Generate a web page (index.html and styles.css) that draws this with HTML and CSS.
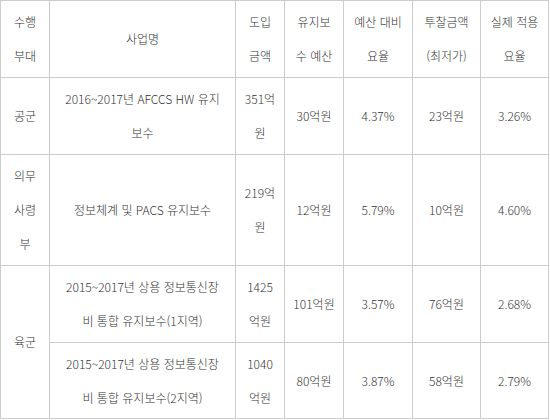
FILE: index.html
```html
<!DOCTYPE html>
<html lang="ko">
<head>
<meta charset="utf-8">
<link rel="stylesheet" href="styles.css">
</head>
<body>
<table class="grid">
  <colgroup>
    <col class="c-unit">
    <col class="c-name">
    <col class="c-cost">
    <col class="c-budget">
    <col class="c-rate">
    <col class="c-bid">
    <col class="c-real">
  </colgroup>
  <tr class="r2">
    <td>수행<br>부대</td>
    <td>사업명</td>
    <td>도입<br>금액</td>
    <td>유지보<br>수 예산</td>
    <td>예산 대비<br>요율</td>
    <td>투찰금액<br>(최저가)</td>
    <td>실제 적용<br>요율</td>
  </tr>
  <tr class="r2">
    <td>공군</td>
    <td>2016~2017년 AFCCS HW 유지<br>보수</td>
    <td>351억<br>원</td>
    <td>30억원</td>
    <td>4.37%</td>
    <td>23억원</td>
    <td>3.26%</td>
  </tr>
  <tr class="r3">
    <td>의무<br>사령<br>부</td>
    <td>정보체계 및 PACS 유지보수</td>
    <td>219억<br>원</td>
    <td>12억원</td>
    <td>5.79%</td>
    <td>10억원</td>
    <td>4.60%</td>
  </tr>
  <tr class="r2">
    <td rowspan="2">육군</td>
    <td>2015~2017년 상용 정보통신장<br>비 통합 유지보수(1지역)</td>
    <td>1425<br>억원</td>
    <td>101억원</td>
    <td>3.57%</td>
    <td>76억원</td>
    <td>2.68%</td>
  </tr>
  <tr class="r2 last">
    <td>2015~2017년 상용 정보통신장<br>비 통합 유지보수(2지역)</td>
    <td>1040<br>억원</td>
    <td>80억원</td>
    <td>3.87%</td>
    <td>58억원</td>
    <td>2.79%</td>
  </tr>
</table>
</body>
</html>
```

FILE: styles.css
```css
html, body {
  margin: 0;
  padding: 0;
  background: #ffffff;
}

.grid {
  border-collapse: collapse;
  table-layout: fixed;
  width: 549px;
  font-family: "Noto Sans CJK KR", "Noto Sans", sans-serif;
  font-size: 12px;
  font-weight: 300;
  color: #333333;
}

.c-unit { width: 49px; }
.c-name { width: 186px; }
.c-cost { width: 49px; }
.c-budget { width: 59px; }
.c-rate { width: 69px; }
.c-bid { width: 68px; }
.c-real { width: 68px; }

.grid td {
  border: 1px solid #cccccc;
  text-align: center;
  vertical-align: middle;
  padding: 0 2px;
  line-height: 34px;
  white-space: nowrap;
  overflow: hidden;
}

.r2 td { height: 76px; }
.r3 td { height: 110px; }
.r2.last td { height: 75px; }
```
